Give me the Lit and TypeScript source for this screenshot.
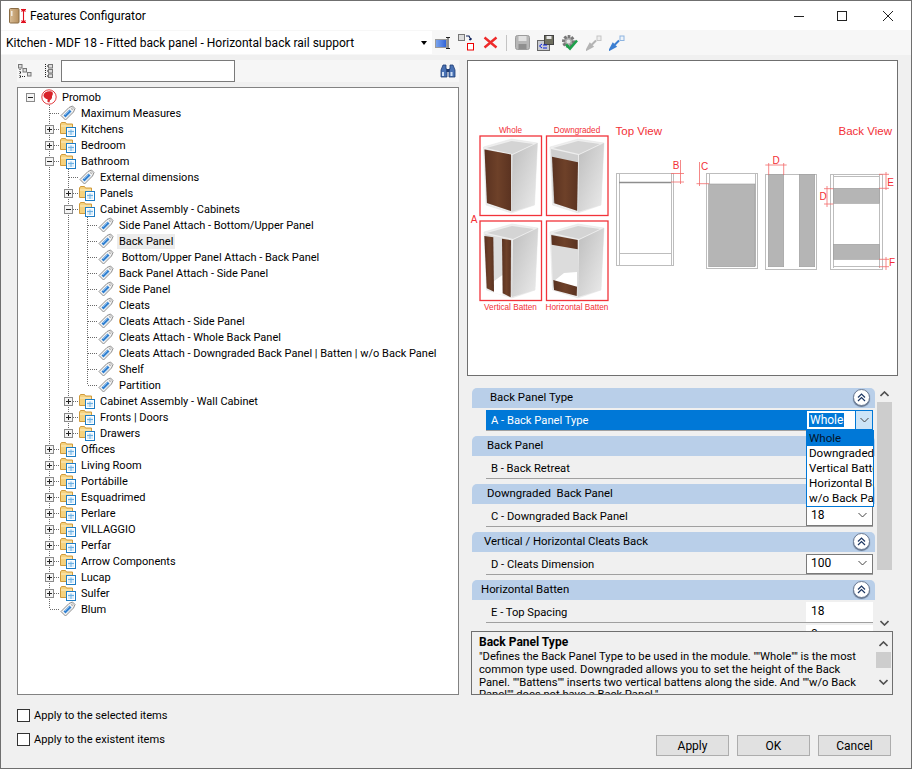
import { LitElement, html, css, svg } from "lit";
import { customElement } from "lit/decorators.js";

type Row = { l: number; t: string; i: "tag" | "folder" | "root"; e?: "+" | "-"; sel?: boolean };
const rows: Row[] = [
  { l: 0, t: "Promob", i: "root", e: "-" },
  { l: 1, t: "Maximum Measures", i: "tag" },
  { l: 1, t: "Kitchens", i: "folder", e: "+" },
  { l: 1, t: "Bedroom", i: "folder", e: "+" },
  { l: 1, t: "Bathroom", i: "folder", e: "-" },
  { l: 2, t: "External dimensions", i: "tag" },
  { l: 2, t: "Panels", i: "folder", e: "+" },
  { l: 2, t: "Cabinet Assembly - Cabinets", i: "folder", e: "-" },
  { l: 3, t: "Side Panel Attach - Bottom/Upper Panel", i: "tag" },
  { l: 3, t: "Back Panel", i: "tag", sel: true },
  { l: 3, t: " Bottom/Upper Panel Attach - Back Panel", i: "tag" },
  { l: 3, t: "Back Panel Attach - Side Panel", i: "tag" },
  { l: 3, t: "Side Panel", i: "tag" },
  { l: 3, t: "Cleats", i: "tag" },
  { l: 3, t: "Cleats Attach - Side Panel", i: "tag" },
  { l: 3, t: "Cleats Attach - Whole Back Panel", i: "tag" },
  { l: 3, t: "Cleats Attach - Downgraded Back Panel | Batten | w/o Back Panel", i: "tag" },
  { l: 3, t: "Shelf", i: "tag" },
  { l: 3, t: "Partition", i: "tag" },
  { l: 2, t: "Cabinet Assembly - Wall Cabinet", i: "folder", e: "+" },
  { l: 2, t: "Fronts | Doors", i: "folder", e: "+" },
  { l: 2, t: "Drawers", i: "folder", e: "+" },
  { l: 1, t: "Offices", i: "folder", e: "+" },
  { l: 1, t: "Living Room", i: "folder", e: "+" },
  { l: 1, t: "Portábille", i: "folder", e: "+" },
  { l: 1, t: "Esquadrimed", i: "folder", e: "+" },
  { l: 1, t: "Perlare", i: "folder", e: "+" },
  { l: 1, t: "VILLAGGIO", i: "folder", e: "+" },
  { l: 1, t: "Perfar", i: "folder", e: "+" },
  { l: 1, t: "Arrow Components", i: "folder", e: "+" },
  { l: 1, t: "Lucap", i: "folder", e: "+" },
  { l: 1, t: "Sulfer", i: "folder", e: "+" },
  { l: 1, t: "Blum", i: "tag" },
];

const hasLaterSibling = (idx: number, level: number) => {
  for (let j = idx + 1; j < rows.length; j++) {
    if (rows[j].l < level) return false;
    if (rows[j].l === level) return true;
  }
  return false;
};

const dot = "#6a6a6a";
const cell = (col: number, idx: number) => {
  const r = rows[idx];
  const parts: unknown[] = [];
  if (col < r.l) {
    if (col > 0 && hasLaterSibling(idx, col))
      parts.push(svg`<line x1="9.5" y1="0" x2="9.5" y2="16" stroke=${dot} stroke-dasharray="1 1"/>`);
  } else if (col > 0) {
    const last = !hasLaterSibling(idx, col);
    parts.push(svg`<line x1="9.5" y1="0" x2="9.5" y2=${last ? 8 : 16} stroke=${dot} stroke-dasharray="1 1"/>`);
    parts.push(svg`<line x1="10" y1="8.5" x2="19" y2="8.5" stroke=${dot} stroke-dasharray="1 1"/>`);
  }
  if (col === r.l && r.e) {
    parts.push(svg`<rect x="5.5" y="4.5" width="8" height="8" fill="#f4f4f4" stroke="#8a8a8a"/>
      <line x1="7" y1="8.5" x2="12" y2="8.5" stroke="#222"/>`);
    if (r.e === "+") parts.push(svg`<line x1="9.5" y1="6" x2="9.5" y2="11" stroke="#222"/>`);
  }
  return html`<svg class="cell" width="19" height="16" viewBox="0 0 19 16">${parts}</svg>`;
};

const tagIcon = html`<svg class="ico" width="16" height="16" viewBox="0 0 16 16">
  <path d="M1 10.500 L9 2.500 L12.500 1 L15 3.500 L13.500 7 L5.500 15 Z" fill="#f4f4f4" stroke="#8d8d8d"/>
  <path d="M3.500 10.500 L9.500 4.500 L11.500 6.500 L5.500 12.500 Z" fill="#2f7fd0"/>
  <path d="M5 10 L9.500 5.500 M7 11.500 L11 7.500" stroke="#a9d0f2" stroke-width=".7"/>
  <circle cx="12.300" cy="3.700" r=".9" fill="#fff" stroke="#777" stroke-width=".5"/>
</svg>`;
const folderIcon = html`<svg class="ico" width="16" height="16" viewBox="0 0 16 16">
  <path d="M.5 3 L1.5 1.5 H5.5 L6.5 3 H12.5 V12.5 H.5 Z" fill="#f6d27e" stroke="#cf9a3c"/>
  <path d="M1 5 H12" stroke="#fbeec6"/>
  <rect x="6.5" y="6.5" width="9" height="9" fill="#fff" stroke="#1f7dc4"/>
  <rect x="8" y="8.500" width="6" height="5.500" fill="#d9ecfa"/>
  <path d="M8 10.500 H14 M11 8.500 V14" stroke="#6cb1e4"/>
</svg>`;
const rootIcon = html`<svg class="ico" width="16" height="16" viewBox="0 0 16 16">
  <circle cx="8" cy="8" r="7.2" fill="#fff" stroke="#e23b3f" stroke-width="1"/>
  <path d="M2.500 6 C3 3 7 1.500 10.500 2.500 C12.500 3.200 12 6 11 7 C11.500 9 10 11 9 11 L8.500 13.500 L6.500 13 L6.500 10 C4.500 10 2.300 8 2.500 6 Z" fill="#d8232a"/>
</svg>`;
const icons = { tag: tagIcon, folder: folderIcon, root: rootIcon };

const chev = html`<svg width="9" height="6" viewBox="0 0 9 6"><path d="M.5 1 L4.5 5 L8.5 1" fill="none" stroke="#444"/></svg>`;
const dbl = html`<span class="dbl"><svg width="9" height="9" viewBox="0 0 9 9"><path d="M1 4.5 L4.5 1 L8 4.5 M1 8 L4.5 4.5 L8 8" fill="none" stroke="#1d3763" stroke-width="1.2"/></svg></span>`;

const cabinet = (dx: number, dy: number, browns: string[], back = "#cfcfcf", gap = "") => svg`
  <g transform="translate(${dx} ${dy})">
    <polygon points="4,11 32,3 58,7 55,69 32,77 6.5,69" fill="#eeeeee" stroke="#e2e2e2" stroke-width=".5"/>
    <polygon points="7,12 32,5 54,8 33,18" fill="#d4d4d4"/>
    <polygon points="5,13 32,19 32,75 7,67" fill=${back}/>
    ${gap ? svg`<polygon points=${gap} fill="#fff"/>` : ""}
    <polygon points="33,19 58,7 55,69 32,76" fill="url(#side)"/>
    ${browns.map((p) => svg`<polygon points=${p} fill="url(#wood)"/>`)}
  </g>`;

const g = "#bdbdbd";
const red = "#f22f36";
const preview = html`<svg class="pv" width="429" height="314" viewBox="468 61 429 314">
  <defs>
    <linearGradient id="side" x1="0" y1="0" x2="1" y2="1"><stop offset="0" stop-color="#bdbdbd"/><stop offset="1" stop-color="#ececec"/></linearGradient>
    <linearGradient id="wood" x1="0" y1="0" x2="1" y2="0"><stop offset="0" stop-color="#5a3220"/><stop offset=".5" stop-color="#6e4129"/><stop offset="1" stop-color="#5b3321"/></linearGradient>
  </defs>
  ${cabinet(479.5, 136, ["5,13.5 31.5,18.5 31.5,75 7.5,67"])}
  ${cabinet(546, 136, ["6,20.7 32,26.3 31,74.7 8.3,67.3"])}
  ${cabinet(480, 221, ["4.3,15 13.3,16.3 14,70.7 6.7,67.3", "22,17.7 31,19.3 30.7,76.3 22.7,72.3"], "#dcdcdc", "14,72 22.500,74 22.500,54 14,60")}
  ${cabinet(546, 221, ["5.3,14 31.7,19 31.7,28.3 5.7,23.7", "7.3,59 31,65.7 30.7,75 8,69"], "#dcdcdc", "8,60 31,66 31,51 18,52")}
  <g fill="none" stroke="#f2333a" stroke-width="1.3">
    <rect x="480" y="136" width="61.5" height="79.5"/><rect x="546.5" y="136" width="61.5" height="79.5"/>
    <rect x="480" y="221" width="61.5" height="79.5"/><rect x="546.5" y="221" width="61.5" height="79.5"/>
  </g>
  <g fill=${red} font-family="Liberation Sans, sans-serif" font-size="8.2" text-anchor="middle">
    <text x="510.5" y="133">Whole</text><text x="577" y="133">Downgraded</text>
    <text x="510.5" y="310">Vertical Batten</text><text x="577" y="310">Horizontal Batten</text>
    <text x="474" y="222.500" font-size="10">A</text>
  </g>
  <g fill=${red} font-family="Liberation Sans, sans-serif" font-size="11.500">
    <text x="615.500" y="135">Top View</text>
    <text x="892" y="135" text-anchor="end">Back View</text>
  </g>
  <g fill="#fff" stroke=${g}>
    <rect x="616.500" y="173.500" width="57" height="92"/>
    <rect x="706.500" y="173.500" width="51" height="95"/>
    <rect x="765.500" y="174.500" width="51" height="95"/>
    <rect x="830.500" y="174.500" width="52" height="95"/>
  </g>
  <g stroke=${g} fill="none">
    <path d="M619.500 173 V265 M671.500 173 V265 M619 253.500 H671"/>
    <path d="M709.500 173 V266 M755.500 173 V266"/>
    <path d="M833.500 174 V268 M879.500 174 V268 M833 176.500 H879 M833 266.500 H879"/>
  </g>
  <path d="M619 182.500 H671" stroke="#8e8e8e" stroke-width="1.500"/>
  <g fill="#b5b5b5" stroke="#9b9b9b" stroke-width=".6">
    <rect x="708.700" y="184" width="46.300" height="82.700"/>
    <rect x="768.300" y="174.500" width="15.400" height="92.200"/>
    <rect x="799.300" y="174.500" width="15.400" height="92.200"/>
    <rect x="833.300" y="188.300" width="46" height="15"/>
    <rect x="833.300" y="244.300" width="46" height="15"/>
  </g>
  <g stroke="#f26a6a" stroke-width=".8" fill="none">
    <path d="M680.500 160 V184 M671 173.500 H684 M671 182 H684"/>
    <path d="M699.500 162 V186 M696.500 183.700 H709"/>
    <path d="M765.300 165 H786.700 M768.700 163 V175 M783.700 163 V175"/>
    <path d="M886 172 V190 M879 174.300 H889 M879 188.300 H889"/>
    <path d="M827 186 V207 M824 188.700 H833.300 M824 204 H833.300"/>
    <path d="M886 257 V270 M879 259.300 H889 M879 266.700 H889"/>
  </g>
  <g fill=${red} font-family="Liberation Sans, sans-serif" font-size="10" text-anchor="middle">
    <text x="676" y="169">B</text><text x="704.500" y="170">C</text><text x="776" y="163.500">D</text>
    <text x="823" y="199.500">D</text><text x="890.500" y="186">E</text><text x="892" y="266">F</text>
  </g>
</svg>`;

const sections = [
  { h: "Back Panel Type", x: 18, label: "A - Back Panel Type", v: "sel" },
  { h: "Back Panel", x: 15, label: "B - Back Retreat", v: "18" },
  { h: "Downgraded  Back Panel", x: 15, label: "C - Downgraded Back Panel", v: "18" },
  { h: "Vertical / Horizontal Cleats Back", x: 12, label: "D - Cleats Dimension", v: "100" },
];

@customElement("app-root")
export class AppRoot extends LitElement {
  static styles = css`
    :host { display: flex; flex-direction: column; width: 912px; height: 769px; box-sizing: border-box;
      border: 1px solid #6f6f6f; background: #f0f0f0; color: #000;
      font-family: Roboto, "Noto Sans", sans-serif; font-size: 12px; overflow: hidden; }
    svg { display: block; flex: none; }
    .title { height: 29px; background: #fff; display: flex; align-items: center; padding-left: 8px; font-size: 12px; }
    .title .name { margin-left: 3px; flex: 1; }
    .win { display: flex; align-items: center; }
    .win span { height: 29px; display: flex; align-items: center; justify-content: center; }
    .win .w1 { width: 40px; }
    .win .w2, .win .w3 { width: 46px; }
    .bar { height: 25px; background: #f7f7f7; display: flex; align-items: center; }
    .combo { width: 431px; height: 23px; background: #fff; display: flex; align-items: center; padding-left: 5px; box-sizing: border-box; flex: none; }
    .combo .t { flex: 1; white-space: nowrap; }
    .combo .arrow { width: 0; height: 0; border: 3px solid transparent; border-top: 4px solid #000; border-bottom: 0; margin-right: 5px; }
    .tools { display: flex; align-items: center; margin-left: 3px; gap: 5px; }
    .tools .m2 { margin-left: 2px; }
    .tools .m3 { margin-left: 3px; }
    .sep { width: 1px; height: 16px; background: #c4c4c4; margin: 0 3px; }
    .main { display: grid; grid-template-columns: 443px 431px; column-gap: 7px; padding: 5px 0 0 16px; height: 640px; box-sizing: border-box; flex: none; }
    .left { display: flex; flex-direction: column; gap: 5px; }
    .ltools { height: 22px; display: flex; align-items: center; background: #f6f6f6; margin-right: 1px; }
    .ltools .second { margin-left: 10px; }
    .search { width: 174px; height: 22px; margin-left: 6px; background: #fff; border: 1px solid #7a7a7a; box-sizing: border-box; }
    .ltools .bino { margin-left: auto; margin-right: 3px; }
    .tree { height: 608px; box-sizing: border-box; background: #fff; border: 1px solid #828282; padding: 1px 0 0 3px; width: 442px; overflow: hidden; font-size: 11px; }
    .row { display: flex; align-items: center; height: 16px; }
    .ico { margin-left: 1px; }
    .lbl { margin-left: 3px; padding: 0 2px; line-height: 15px; height: 15px; white-space: pre; }
    .lbl.sel { background: #ececec; }
    .right { display: flex; flex-direction: column; }
    .preview { height: 316px; box-sizing: border-box; background: #fff; border: 1px solid #6f6f6f; flex: none; }
    .propswrap { margin: 10px 5px 0 4px; height: 245px; position: relative; display: flex; flex: none; overflow: hidden; font-size: 11.2px; }
    .props { width: 404px; margin-top: 2px; flex: none; }
    .sec { height: 20px; background: #b9cfe9; border-radius: 5px 5px 0 0; display: flex; align-items: center; justify-content: space-between; padding-right: 5px; padding-bottom: 2px; box-sizing: border-box; margin-left: 1px; font-size: 11.4px; }
    .dbl { width: 15px; height: 15px; border-radius: 50%; background: #fff; border: 1px solid #6c7c95; box-shadow: 0 1px 1px #5d6e88; display: flex; align-items: center; justify-content: center; }
    .prow { margin: 2px 2px 5px 15px; height: 21px; box-sizing: border-box; border-bottom: 1px solid #a0a0a0; display: flex; }
    .prow.tight { margin-bottom: 0; }
    .prow .k { flex: 1; padding-left: 5px; display: flex; align-items: center; }
    .prow.on .k { background: #0078d7; color: #fff; }
    .val { width: 67px; box-sizing: border-box; background: #fff; display: flex; align-items: center; justify-content: space-between; padding: 0 5px 2px 4px; font-size: 12px; }
    .val.combo2 { border: 1px solid #7a7a7a; }
    .val.plain { padding-left: 5px; }
    .val.on { border: 1px solid #0078d7; padding: 0 0 0 2px; align-items: stretch; }
    .val.on .hl { align-self: center; background: #0078d7; color: #fff; padding: 0 1px; line-height: 14px; margin-top: -1px; }
    .val.on .btn { width: 16px; background: #cce4f7; border-left: 1px solid #0078d7; display: flex; align-items: center; justify-content: center; margin-left: auto; }
    .drop { position: absolute; left: 335px; top: 44px; width: 68px; height: 77px; box-sizing: border-box; background: #fff; border: 1px solid #0078d7; overflow: hidden; white-space: nowrap; font-size: 11.6px; }
    .drop div { height: 15px; line-height: 15px; padding-left: 2px; }
    .drop .s { background: #0078d7; color: #04142a; }
    .sb { width: 15px; margin-left: 2px; background: #f0f0f0; display: flex; flex-direction: column; align-items: center; flex: none; }
    .sb path { stroke-width: 1.6; stroke: #505050; }
    .sb .a { height: 16px; display: flex; align-items: center; justify-content: center; flex: none; }
    .sb .th { background: #cdcdcd; width: 100%; flex: none; }
    .sb .gap { flex: 1; }
    .sb.d { margin: 4px 1px 4px 0; }
    .up { transform: rotate(180deg); }
    .desc { height: 64px; margin: 0 5px 0 4px; box-sizing: border-box; border: 1px solid #6f6f6f; background: #f0f0f0; display: flex; flex: none; overflow: hidden; font-size: 11.2px; }
    .dt { flex: 1; padding: 2px 0 0 7px; line-height: 12.8px; white-space: nowrap; overflow: hidden; }
    .dt b { display: block; line-height: 16px; margin-bottom: 1px; font-size: 12px; }
    .foot { flex: 1; display: flex; justify-content: space-between; padding: 13px 20px 0 16px; }
    .checks { display: flex; flex-direction: column; gap: 10px; font-size: 11.1px; }
    .chk { display: flex; align-items: center; gap: 4px; height: 14px; }
    .box { width: 13px; height: 13px; box-sizing: border-box; border: 1px solid #333; background: #fff; }
    .btns { display: flex; gap: 8px; align-items: flex-start; padding-top: 27px; }
    .bt { width: 73px; height: 21px; box-sizing: border-box; background: #e1e1e1; border: 1px solid #adadad; display: flex; align-items: center; justify-content: center; }
  `;

  private treeRow(r: Row, idx: number) {
    const cols = [];
    for (let c = 0; c <= r.l; c++) cols.push(cell(c, idx));
    return html`<div class="row">${cols}${icons[r.i]}<span class="lbl ${r.sel ? "sel" : ""}">${r.t}</span></div>`;
  }

  render() {
    return html`
      <div class="title">
        <svg width="18" height="16" viewBox="0 0 18 16">
          <defs><linearGradient id="door" x1="0" x2="1"><stop offset="0" stop-color="#d9bd96"/><stop offset="1" stop-color="#b68f5e"/></linearGradient></defs>
          <rect x=".5" y=".5" width="9.500" height="14.500" rx="1" fill="url(#door)" stroke="#8a6c44"/>
          <rect x="2" y="3" width="1.500" height="5" fill="#f2ece2"/>
          <path d="M14.500 1 V15 M12 1.500 H17 M12 14.500 H17 M12.500 3.500 L14.500 1.500 L16.500 3.500 M12.500 12.500 L14.500 14.500 L16.500 12.500" fill="none" stroke="#e0101e" stroke-width="1.100"/>
        </svg>
        <span class="name">Features Configurator</span>
        <div class="win">
          <span class="w1"><svg width="10" height="10"><path d="M0 5.500 H10" stroke="#222"/></svg></span>
          <span class="w2"><svg width="10" height="10"><rect x=".5" y=".5" width="9" height="9" fill="none" stroke="#222"/></svg></span>
          <span class="w3"><svg width="10" height="10"><path d="M0 0 L10 10 M10 0 L0 10" stroke="#222"/></svg></span>
        </div>
      </div>
      <div class="bar">
        <div class="combo"><span class="t">Kitchen - MDF 18 - Fitted back panel - Horizontal back rail support</span><span class="arrow"></span></div>
        <div class="tools">
          <svg width="16" height="16" viewBox="0 0 16 16"><defs><linearGradient id="bg" x1="0" x2="1"><stop offset="0" stop-color="#7fa8ee"/><stop offset="1" stop-color="#2f62d8"/></linearGradient></defs>
            <rect x=".5" y="4.500" width="11" height="8" fill="url(#bg)" stroke="#9a9a9a"/><path d="M11 2.500 H15 M11 13.500 H15 M13 2.500 V13.500" stroke="#222" fill="none"/></svg>
          <svg class="m2" width="17" height="17" viewBox="0 0 17 17"><rect x=".5" y=".5" width="6" height="6" fill="#ddd" stroke="#777"/><rect x="9.500" y="9.500" width="6" height="6.500" fill="#fff" stroke="#e00"/><path d="M8 2 H11 L13 6 M13 6 V4 M13 6 L11 5.500" fill="none" stroke="#10235c" stroke-width="1.200"/></svg>
          <svg class="m3" width="15" height="15" viewBox="0 0 15 15"><path d="M1.500 2.500 L13.500 12.500 M13.500 2.500 L1.500 12.500" stroke="#ee2a2a" stroke-width="2.400"/></svg>
          <span class="sep"></span>
          <svg width="15" height="15" viewBox="0 0 15 15"><rect x=".5" y=".5" width="14" height="14" rx="2" fill="#b7b7b7" stroke="#9c9c9c"/><rect x="3.500" y="1" width="8" height="5" fill="#e2e2e2"/><rect x="3.500" y="9" width="8" height="5" fill="#8f8f8f"/></svg>
          <svg class="m2" width="17" height="16" viewBox="0 0 17 16"><rect x=".5" y="5.500" width="12" height="10" fill="#c9cbd2" stroke="#666"/><rect x="7.500" y=".5" width="9" height="9" fill="#6f6f5f" stroke="#444"/><rect x="9.500" y="1" width="5" height="3" fill="#e8e8e8"/><path d="M5 9 L2.500 11 L5 13 M6 13 H10 M6 10 H10" fill="none" stroke="#0a22e0"/></svg>
          <svg class="m2" width="17" height="17" viewBox="0 0 17 17"><circle cx="7.500" cy="7.500" r="5" fill="#aaa" stroke="#777" stroke-width="3" stroke-dasharray="2.500 1.200"/><circle cx="7.500" cy="7.500" r="2" fill="#e6e6e6"/><path d="M5 10.500 L9 14.500 L16 6.500" fill="none" stroke="#1da04a" stroke-width="2.600"/></svg>
          <svg class="m3" width="16" height="16" viewBox="0 0 16 16"><path d="M1 14.500 L4 9 L6.500 11.500 Z M4.500 11 L10 5.500" fill="#b4b4b4" stroke="#b4b4b4" stroke-width="2"/><rect x="11" y="1" width="4" height="4.500" fill="#eee" stroke="#c5c5c5"/></svg>
          <svg class="m2" width="16" height="16" viewBox="0 0 16 16"><path d="M1 14.500 L4 9 L6.500 11.500 Z M4.500 11 L10 5.500" fill="#3c7fd2" stroke="#3c7fd2" stroke-width="2"/><rect x="11" y="1" width="4" height="4.500" fill="#eef4fb" stroke="#8db4e0"/></svg>
        </div>
      </div>
      <div class="main">
        <div class="left">
          <div class="ltools">
            <svg width="16" height="16" viewBox="0 0 16 16"><g fill="#ddd" stroke="#777"><rect x="1.500" y="1.500" width="3.500" height="3.500"/><rect x="6" y="5.500" width="3.500" height="3.500"/><rect x="10.500" y="9.500" width="3.500" height="3.500"/></g><path d="M3 6 V15 M3 9.500 H5 M3 13.500 H9" stroke="#222" stroke-dasharray="1 1" fill="none"/></svg>
            <svg class="second" width="12" height="16" viewBox="0 0 12 16"><path d="M2.500 1 V15 M4 3 H5 M4 8 H5 M4 13 H5" stroke="#222" stroke-dasharray="1 1" fill="none"/><g fill="#ddd" stroke="#777"><rect x="5.500" y="1.500" width="4" height="3.500"/><rect x="5.500" y="6.500" width="4" height="3.500"/><rect x="5.500" y="11" width="4" height="3.500"/></g></svg>
            <div class="search"></div>
            <svg class="bino" width="16" height="14" viewBox="0 0 16 14"><g fill="#4a72b4" stroke="#1f3c73" stroke-width=".8"><path d="M3 1 H6 V5 H7 V13 H1 V6 Z"/><path d="M10 1 H13 L15 6 V13 H9 V5 H10 Z"/></g><rect x="6.500" y="5" width="3" height="3" fill="#1f3c73"/><rect x="2" y="8" width="2" height="4" fill="#cfe0f5"/><rect x="10.500" y="8" width="2" height="4" fill="#cfe0f5"/></svg>
          </div>
          <div class="tree">${rows.map((r, i) => this.treeRow(r, i))}</div>
        </div>
        <div class="right">
          <div class="preview">${preview}</div>
          <div class="propswrap">
            <div class="props">
              ${sections.map((s) => html`
                <div class="sec" style="padding-left:${s.x}px"><span style="white-space:pre">${s.h}</span>${dbl}</div>
                <div class="prow ${s.v === "sel" ? "on" : ""}">
                  <div class="k">${s.label}</div>
                  ${s.v === "sel"
                    ? html`<div class="val on"><span class="hl">Whole</span><span class="btn">${chev}</span></div>`
                    : html`<div class="val combo2"><span>${s.v}</span>${chev}</div>`}
                </div>`)}
              <div class="sec" style="padding-left:9px"><span>Horizontal Batten</span>${dbl}</div>
              <div class="prow tight"><div class="k">E - Top Spacing</div><div class="val plain">18</div></div>
              <div class="prow"><div class="k">F - Lower Spacing</div><div class="val plain">0</div></div>
            </div>
            <div class="drop">
              <div class="s">Whole</div><div>Downgraded</div><div>Vertical Batten</div><div>Horizontal Batten</div><div>w/o Back Panel</div>
            </div>
            <div class="sb">
              <div class="a up">${chev}</div>
              <div class="th" style="height:168px"></div>
              <div class="gap"></div>
              <div class="a">${chev}</div>
            </div>
          </div>
          <div class="desc">
            <div class="dt"><b>Back Panel Type</b>"Defines the Back Panel Type to be used in the module. ""Whole"" is the most<br>common type used. Downgraded allows you to set the height of the Back<br>Panel. ""Battens"" inserts two vertical battens along the side. And ""w/o Back<br>Panel"" does not have a Back Panel."</div>
            <div class="sb d">
              <div class="a up">${chev}</div>
              <div class="th" style="height:16px"></div>
              <div class="gap"></div>
              <div class="a">${chev}</div>
            </div>
          </div>
        </div>
      </div>
      <div class="foot">
        <div class="checks">
          <div class="chk"><span class="box"></span><span>Apply to the selected items</span></div>
          <div class="chk"><span class="box"></span><span>Apply to the existent items</span></div>
        </div>
        <div class="btns"><div class="bt">Apply</div><div class="bt">OK</div><div class="bt">Cancel</div></div>
      </div>
    `;
  }
}
